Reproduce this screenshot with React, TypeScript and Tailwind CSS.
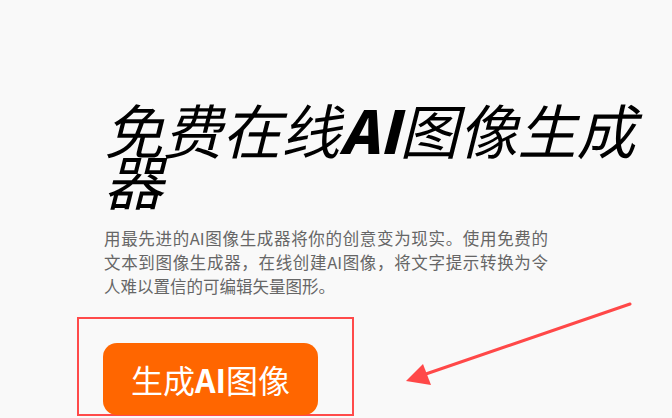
const cjk = { fontFamily: '"Noto Sans CJK SC", "Noto Sans", sans-serif' };

export default function App() {
  return (
    <main
      className="relative min-h-screen overflow-hidden bg-[#f9f9f9] pl-[104px] pt-[103px]"
      style={cjk}
    >
      <h1 className="text-[59px] leading-[51px] font-normal italic text-black">
        免费在线<span className="font-black">AI</span>图像生成器
      </h1>

      <div className="mt-[21px] w-[444px] text-[16.5px] leading-[24px] text-[#666]">
        <p className="text-justify [text-align-last:justify]">
          用最先进的AI图像生成器将你的创意变为现实。使用免费的
        </p>
        <p className="text-justify [text-align-last:justify]">
          文本到图像生成器，在线创建AI图像，将文字提示转换为令
        </p>
        <p>人难以置信的可编辑矢量图形。</p>
      </div>

      <div className="mt-[19px] ml-[-27px] w-[277px] h-[99px] border-2 border-[#ff4a4a] pl-[24px] pt-[24px]">
        <button className="flex h-[72px] w-[215px] items-center justify-center rounded-[14px] bg-[#ff6600] text-[32px] text-white">
          生成<span className="font-bold">AI</span>图像
        </button>
      </div>

      {/* annotation arrow */}
      <svg
        className="pointer-events-none absolute left-0 top-0"
        width="672"
        height="418"
        viewBox="0 0 672 418"
      >
        <line x1="630" y1="304" x2="420" y2="376" stroke="#ff4848" strokeWidth="3" strokeLinecap="round" />
        <polygon points="406,381 423,364 431,385" fill="#ff4848" />
      </svg>
    </main>
  );
}
